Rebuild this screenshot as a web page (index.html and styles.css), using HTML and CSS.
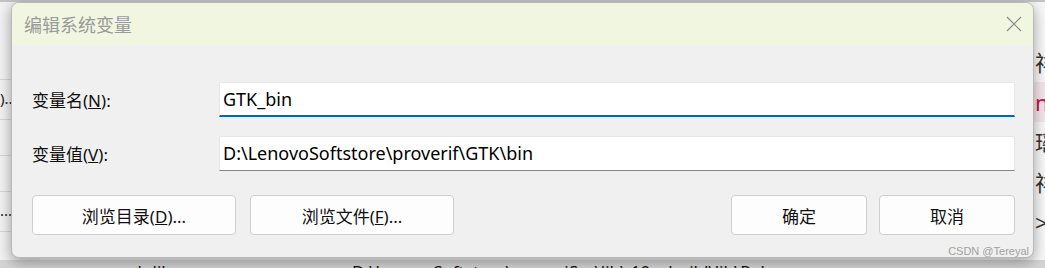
FILE: index.html
```html
<!DOCTYPE html>
<html lang="zh-CN">
<head>
    <meta charset="UTF-8">
    <title>编辑系统变量</title>
    <link rel="stylesheet" href="styles.css">
</head>
<body>
    <div class="desktop">
        <!-- window behind the dialog, only its edges show -->
        <div class="backwin">
            <div class="leftcol">
                <div class="lrow"></div>
                <div class="lrow txt">)..</div>
                <div class="lrow"></div>
                <div class="lrow"></div>
                <div class="lrow txt">...</div>
            </div>
            <div class="rightcol">
                <div class="rrow">祥</div>
                <div class="rrow red">nc</div>
                <div class="rrow">瑶</div>
                <div class="rrow">祥</div>
                <div class="rrow">&gt;</div>
            </div>
            <div class="bottomrow">
                <span class="b1">ab:lib</span>
                <span class="b2">D:\LenovoSoftstore\proverif\...\lib\ 10 .. build\lib\Release</span>
            </div>
        </div>

        <div class="dialog">
            <div class="titlebar">
                <span class="title">编辑系统变量</span>
                <svg class="close" width="16" height="16" viewBox="0 0 16 16">
                    <path d="M1 1 L15 15 M15 1 L1 15" stroke="#8a8a8a" stroke-width="1.2" fill="none"/>
                </svg>
            </div>
            <div class="body">
                <div class="fields">
                    <label class="lbl">变量名(<u>N</u>):</label>
                    <div class="inp active">GTK_bin</div>
                    <label class="lbl">变量值(<u>V</u>):</label>
                    <div class="inp">D:\LenovoSoftstore\proverif\GTK\bin</div>
                </div>
                <div class="buttons">
                    <div class="left">
                        <button class="btn">浏览目录(<u>D</u>)...</button>
                        <button class="btn">浏览文件(<u>F</u>)...</button>
                    </div>
                    <div class="right">
                        <button class="btn small">确定</button>
                        <button class="btn small">取消</button>
                    </div>
                </div>
            </div>
            <span class="mark">CSDN @Tereyal</span>
        </div>
    </div>
</body>
</html>
```

FILE: styles.css
```css
* {
    margin: 0;
    padding: 0;
    box-sizing: border-box;
}

body {
    width: 1045px;
    height: 268px;
    overflow: hidden;
    font-family: "Noto Sans", "Noto Sans CJK SC", sans-serif;
    background: #f4f4f4;
}

.desktop {
    position: relative;
    width: 1045px;
    height: 268px;
    overflow: hidden;
}

.backwin {
    position: absolute;
    inset: 0;
    border-top: 2px solid #c4c4c4;
}

.leftcol {
    position: absolute;
    left: 0;
    top: 0;
    width: 40px;
    height: 268px;
    background: linear-gradient(to right, #f3f3f3, #e6e6e6);
}

.lrow {
    height: 36px;
    border-bottom: 1px solid #d6d6d6;
    font-size: 15px;
    color: #222;
    line-height: 36px;
}

.lrow:first-child {
    height: 78px;
}

.lrow.txt {
    height: 40px;
}

.rightcol {
    position: absolute;
    left: 1034px;
    top: 0;
    width: 11px;
    height: 268px;
    padding-top: 40px;
    background: #f7f7f7;
    overflow: hidden;
}

.rrow {
    height: 40px;
    padding-left: 1px;
    font-size: 22px;
    line-height: 40px;
    color: #333;
    white-space: nowrap;
}

.rrow.red {
    color: #c0144c;
    background: #f3e4e8;
}

.bottomrow {
    position: absolute;
    left: 0;
    right: 0;
    top: 258px;
    height: 10px;
    background: #d4d4d4;
    font-size: 17px;
    line-height: 24px;
    color: #111;
    white-space: nowrap;
    overflow: hidden;
}

.b1 {
    position: absolute;
    left: 128px;
}

.b2 {
    position: absolute;
    left: 352px;
}

.dialog {
    position: absolute;
    left: 11px;
    top: 2px;
    width: 1023px;
    height: 256px;
    background: #f0f0f0;
    border: 1px solid #b9b9b9;
    border-radius: 8px;
    overflow: hidden;
    box-shadow: 0 4px 14px rgba(0, 0, 0, 0.35);
}

.titlebar {
    height: 42px;
    background: #f0f6e0;
    display: flex;
    align-items: center;
    justify-content: space-between;
    padding: 0 9px 0 12px;
}

.title {
    font-size: 18px;
    color: #9a9a9a;
}

.close {
    margin-right: 2px;
}

.body {
    padding: 37px 18px 0 20px;
}

.fields {
    display: grid;
    grid-template-columns: 187px 1fr;
    row-gap: 19px;
    align-items: center;
}

.lbl {
    font-size: 17px;
    color: #111;
}

.inp {
    height: 35px;
    background: #fff;
    border: 1px solid #e6e6e6;
    border-bottom: 1px solid #888;
    font-size: 18px;
    line-height: 33px;
    padding-left: 3px;
    color: #000;
}

.inp.active {
    border-bottom: 2px solid #0067c0;
}

.buttons {
    display: flex;
    justify-content: space-between;
    margin-top: 24px;
}

.left, .right {
    display: flex;
    gap: 14px;
}

.btn {
    width: 204px;
    height: 40px;
    background: #fdfdfd;
    border: 1px solid #cfcfcf;
    border-radius: 4px;
    font-family: inherit;
    font-size: 17px;
    color: #111;
}

.btn.small {
    width: 136px;
}

.right {
    gap: 12px;
}

.mark {
    position: absolute;
    right: 4px;
    bottom: 0;
    font-size: 11px;
    color: #a0a0a0;
    font-family: "Liberation Sans", sans-serif;
}
```
